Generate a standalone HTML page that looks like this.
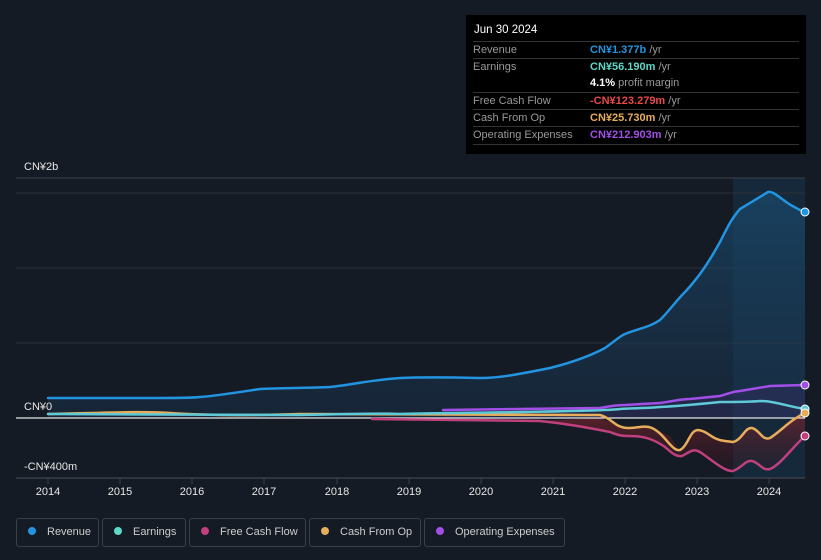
<!DOCTYPE html>
<html><head><meta charset="utf-8"><style>
body{margin:0;background:#151b25;font-family:"Liberation Sans",sans-serif;}
.wrap{position:relative;width:821px;height:560px;overflow:hidden;background:#151b25}
.tip{position:absolute;left:466px;top:15px;width:340px;height:139px;background:#000;color:#999;font-size:11px}
.tip .h{position:absolute;left:8px;top:9px;color:#fff;font-size:11.5px}
.row{position:absolute;left:7px;width:326px;border-top:1px solid #333;height:17px}
.row span{position:absolute;top:2px}
.row .v{left:117px}
.leg{position:absolute;top:518px;height:29px;border:1px solid #3a3f48;border-radius:3px;color:#ccc;font-size:11px;box-sizing:border-box;line-height:27px;white-space:nowrap}
.leg i{display:inline-block;width:8px;height:8px;border-radius:50%;margin:0 11px 0 11px;vertical-align:0px}
</style></head><body><div class="wrap">
<svg width="821" height="560" style="position:absolute;left:0;top:0">
<defs>
<linearGradient id="rv" x1="0" y1="0" x2="0" y2="1"><stop offset="0" stop-color="#1a4a6e" stop-opacity=".7"/><stop offset="1" stop-color="#1a3550" stop-opacity=".4"/></linearGradient>
<linearGradient id="fc" x1="0" y1="0" x2="0" y2="1"><stop offset="0" stop-color="#7a2430" stop-opacity=".8"/><stop offset="1" stop-color="#3a1520" stop-opacity=".3"/></linearGradient>
</defs>
<rect x="733" y="178" width="72" height="300" fill="#17354d" opacity=".55"/>
<line x1="16" y1="178" x2="805" y2="178" stroke="#3a3f48"/>
<line x1="16" y1="193" x2="805" y2="193" stroke="#2c323b"/>
<line x1="16" y1="268" x2="805" y2="268" stroke="#2c323b"/>
<line x1="16" y1="343" x2="805" y2="343" stroke="#2c323b"/>
<path d="M48,398 L150,398 C180,398 190,398 200,397 C215,396 240,392 260,389 C280,388 310,388 330,387 C350,385 370,380 400,378 C420,377 440,377 480,378 C500,378 520,374 550,368 C570,363 590,356 605,348 C615,341 620,336 625,334 C640,328 650,327 660,320 C670,310 675,302 685,292 C700,276 710,260 720,242 C728,226 732,218 740,209 C750,203 755,200 768,192 C775,190 785,205 805,212 L805,418 L48,418 Z" fill="url(#rv)"/>
<path d="M600,418 L625,428 640,428 650,427 670,436 680,451 697,430 715,440 733,442 750,427 768,440 790,420 805,413 L805,436 790,450 768,470 750,461 733,471 720,463 697,450 680,457 665,447 650,438 625,436 610,432 580,426 540,421 Z" fill="url(#fc)" opacity=".9"/>
<path d="M443,410 L600,408 C610,406 620,405 625,405 L660,403 C675,401 680,399 690,399 L720,396 C730,393 735,391 740,391 L770,386 L805,385 L805,418 L443,418Z" fill="#3a2f6a" opacity=".35"/>
<line x1="16" y1="418" x2="805" y2="418" stroke="#e8e8e8" stroke-width="1.2"/>
<line x1="16" y1="478" x2="805" y2="478" stroke="#3a3f48" stroke-width="1.5"/>
<g stroke="#3a3f48"><line x1="48" y1="478" x2="48" y2="484"/><line x1="120" y1="478" x2="120" y2="484"/><line x1="192" y1="478" x2="192" y2="484"/><line x1="264" y1="478" x2="264" y2="484"/><line x1="337" y1="478" x2="337" y2="484"/><line x1="409" y1="478" x2="409" y2="484"/><line x1="481" y1="478" x2="481" y2="484"/><line x1="553" y1="478" x2="553" y2="484"/><line x1="625" y1="478" x2="625" y2="484"/><line x1="697" y1="478" x2="697" y2="484"/><line x1="769" y1="478" x2="769" y2="484"/></g>
<g fill="none" stroke-width="2.5" stroke-linejoin="round" stroke-linecap="round">
<path d="M372,419 L540,421 C560,423 580,426 610,432 C618,435 620,436 630,436 C645,436 655,440 665,447 C672,453 676,457 682,456 C690,452 693,448 700,452 C712,460 725,472 733,471 C742,468 745,460 752,461 C760,463 762,471 770,469 C780,465 790,450 805,436" stroke="#c0407d"/>
<path d="M48,414 C100,413 140,411 170,413 C200,415 240,416 300,414 L600,415 C612,418 615,428 628,428 C638,428 645,425 652,428 C665,434 672,452 680,450 C688,446 690,430 698,430 C708,431 712,440 725,441 L733,442 C742,440 745,427 752,428 C760,430 762,441 770,438 C780,432 790,420 805,413" stroke="#e8ad5a"/>
<path d="M48,414 L300,415 C360,414 380,413 400,414 C420,413 600,412 620,409 C640,408 650,408 660,407 C680,406 700,404 720,402 C740,402 750,402 760,401 C775,401 790,407 805,409" stroke="#5fc9d8"/>
<path d="M443,410 L600,408 C610,406 620,405 625,405 L660,403 C675,401 680,399 690,399 L720,396 C730,393 735,391 740,391 L770,386 L805,385" stroke="#a24fe8"/>
<path d="M48,398 L150,398 C180,398 190,398 200,397 C215,396 240,392 260,389 C280,388 310,388 330,387 C350,385 370,380 400,378 C420,377 440,377 480,378 C500,378 520,374 550,368 C570,363 590,356 605,348 C615,341 620,336 625,334 C640,328 650,327 660,320 C670,310 675,302 685,292 C700,276 710,260 720,242 C728,226 732,218 740,209 C750,203 755,200 768,192 C775,190 785,205 805,212" stroke="#2394e0"/>
</g>
<g stroke="#fff" stroke-width="1">
<circle cx="805" cy="212" r="4" fill="#2394e0"/><circle cx="805" cy="385" r="4" fill="#a24fe8"/><circle cx="805" cy="409" r="4" fill="#5fc9d8"/><circle cx="805" cy="413" r="4" fill="#e8ad5a"/><circle cx="805" cy="436" r="4" fill="#c0407d"/>
</g>
<g fill="#e6e6e6" font-size="11" font-family="Liberation Sans, sans-serif">
<text x="24" y="170">CN¥2b</text><text x="24" y="410">CN¥0</text><text x="24" y="470">-CN¥400m</text>
<g text-anchor="middle" font-size="11"><text x="48" y="495">2014</text><text x="120" y="495">2015</text><text x="192" y="495">2016</text><text x="264" y="495">2017</text><text x="337" y="495">2018</text><text x="409" y="495">2019</text><text x="481" y="495">2020</text><text x="553" y="495">2021</text><text x="625" y="495">2022</text><text x="697" y="495">2023</text><text x="769" y="495">2024</text></g>
</g>
</svg>
<div class="tip"><div class="h">Jun 30 2024</div>
<div class="row" style="top:26px"><span>Revenue</span><span class="v" style="color:#2394e0;font-weight:bold">CN¥1.377b <b style="color:#999;font-weight:normal">/yr</b></span></div>
<div class="row" style="top:43px"><span>Earnings</span><span class="v" style="color:#5fd8c8;font-weight:bold">CN¥56.190m <b style="color:#999;font-weight:normal">/yr</b></span></div>
<div style="position:absolute;left:124px;top:62px;color:#fff;font-weight:bold">4.1% <b style="color:#999;font-weight:normal">profit margin</b></div>
<div class="row" style="top:77px"><span>Free Cash Flow</span><span class="v" style="color:#e84848;font-weight:bold">-CN¥123.279m <b style="color:#999;font-weight:normal">/yr</b></span></div>
<div class="row" style="top:94px"><span>Cash From Op</span><span class="v" style="color:#e8ad5a;font-weight:bold">CN¥25.730m <b style="color:#999;font-weight:normal">/yr</b></span></div>
<div class="row" style="top:111px"><span>Operating Expenses</span><span class="v" style="color:#a24fe8;font-weight:bold">CN¥212.903m <b style="color:#999;font-weight:normal">/yr</b></span></div>
<div class="row" style="top:129px;height:0"></div>
</div>
<div class="leg" style="left:16px;width:83px"><i style="background:#2394e0"></i>Revenue</div>
<div class="leg" style="left:102px;width:84px"><i style="background:#5fd8c8"></i>Earnings</div>
<div class="leg" style="left:189px;width:117px"><i style="background:#c0407d"></i>Free Cash Flow</div>
<div class="leg" style="left:309px;width:112px"><i style="background:#e8ad5a"></i>Cash From Op</div>
<div class="leg" style="left:424px;width:141px"><i style="background:#a24fe8"></i>Operating Expenses</div>
</div></body></html>
